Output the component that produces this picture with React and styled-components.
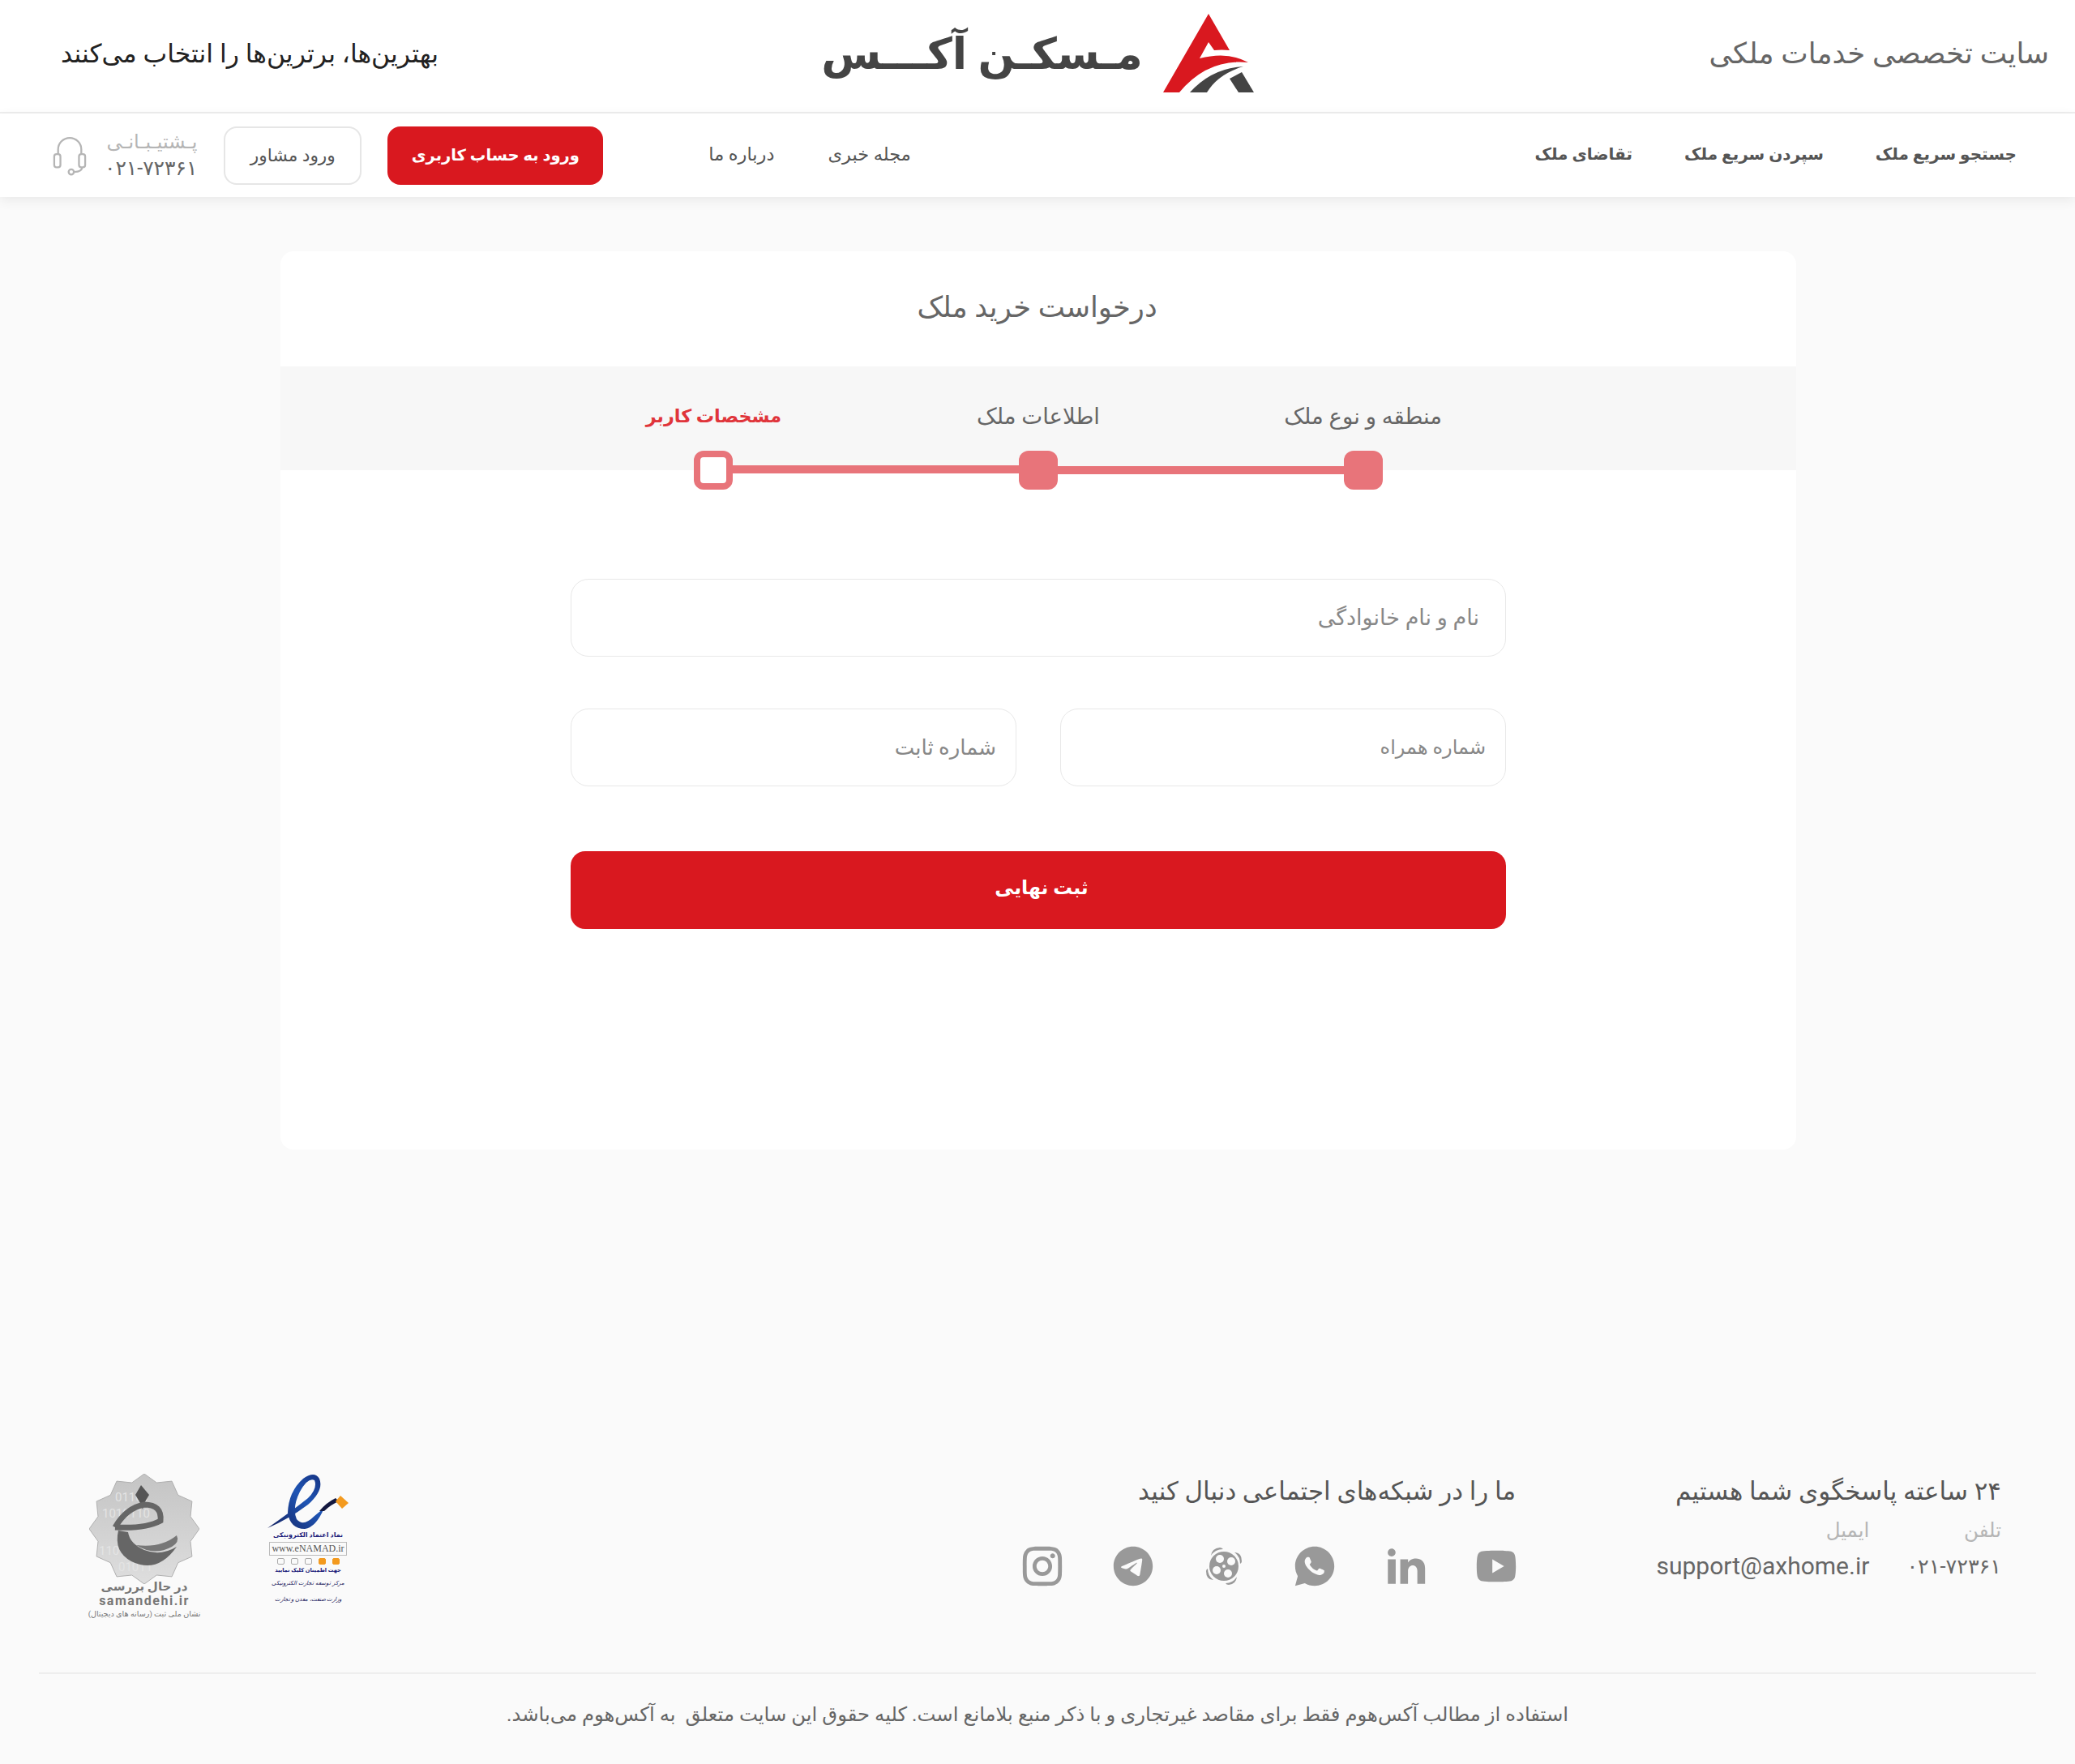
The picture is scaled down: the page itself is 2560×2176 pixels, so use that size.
import React from 'react';
import styled, { createGlobalStyle } from 'styled-components';
import { RiTelegramFill, RiWhatsappFill, RiLinkedinFill, RiYoutubeFill, RiInstagramLine } from 'react-icons/ri';

const FONT = `Roboto, "DejaVu Sans", sans-serif`;
const RED = '#d9181f';

const GlobalStyle = createGlobalStyle`
  html, body { margin: 0; padding: 0; background: #fafafa; }
  body { font-family: ${FONT}; color: #555; }
  * { box-sizing: border-box; }
`;

const App = () => {
  return (
    <Page dir="rtl">
      <GlobalStyle />
      <Header>
        <Slogan>سایت تخصصی خدمات ملکی</Slogan>
        <Logo>
          <LogoMark />
          <LogoText>مـسکـن آکـــس</LogoText>
        </Logo>
        <Tagline>بهترین‌ها، برترین‌ها را انتخاب می‌کنند</Tagline>
      </Header>

      <Nav>
        <NavGroup>
          <NavLink $bold>جستجو سریع ملک</NavLink>
          <NavLink $bold>سپردن سریع ملک</NavLink>
          <NavLink $bold>تقاضای ملک</NavLink>
        </NavGroup>
        <NavGroupSecondary>
          <NavLink>مجله خبری</NavLink>
          <NavLink>درباره ما</NavLink>
        </NavGroupSecondary>
        <LoginButton>ورود به حساب کاربری</LoginButton>
        <AdvisorButton>ورود مشاور</AdvisorButton>
        <Support>
          <SupportText>
            <SupportLabel>پـشتیـبـانـی</SupportLabel>
            <SupportPhone>۰۲۱-۷۲۳۶۱</SupportPhone>
          </SupportText>
          <HeadsetIcon />
        </Support>
      </Nav>

      <Main>
        <Card>
          <CardTitle>درخواست خرید ملک</CardTitle>
          <StepBand>
            <StepLabels>
              <StepLabel>منطقه و نوع ملک</StepLabel>
              <StepLabel>اطلاعات ملک</StepLabel>
              <StepLabel $active>مشخصات کاربر</StepLabel>
            </StepLabels>
          </StepBand>
          <Track>
            <Dot />
            <TrackLine />
            <Dot />
            <TrackLine $raised />
            <Dot $open />
          </Track>
          <Form>
            <Field placeholder="نام و نام خانوادگی" $pad={32} $size={27} />
            <FieldRow>
              <Field placeholder="شماره همراه" $pad={24} $size={24} />
              <Field placeholder="شماره ثابت" $pad={24} $size={26} />
            </FieldRow>
            <Submit>ثبت نهایی</Submit>
          </Form>
        </Card>
      </Main>

      <Footer>
        <FooterTop>
          <Contact>
            <FooterTitle>۲۴ ساعته پاسخگوی شما هستیم</FooterTitle>
            <ContactRow>
              <ContactItem>
                <ContactLabel>تلفن</ContactLabel>
                <ContactValue>۰۲۱-۷۲۳۶۱</ContactValue>
              </ContactItem>
              <ContactItem>
                <ContactLabel>ایمیل</ContactLabel>
                <ContactValue dir="ltr" $latin>support@axhome.ir</ContactValue>
              </ContactItem>
            </ContactRow>
          </Contact>
          <Social>
            <FooterTitle>ما را در شبکه‌های اجتماعی دنبال کنید</FooterTitle>
            <SocialIcons>
              <RiYoutubeFill size={58} />
              <RiLinkedinFill size={58} />
              <RiWhatsappFill size={58} />
              <AparatIcon />
              <RiTelegramFill size={58} />
              <RiInstagramLine size={58} />
            </SocialIcons>
          </Social>
          <Badges>
            <Enamad />
            <Samandehi />
          </Badges>
        </FooterTop>
        <Copyright>استفاده از مطالب آکس‌هوم فقط برای مقاصد غیرتجاری و با ذکر منبع بلامانع است. کلیه حقوق این سایت متعلق  به آکس‌هوم می‌باشد.</Copyright>
      </Footer>
    </Page>
  );
};

const LogoMark = () => (
  <svg width="112" height="98" viewBox="0 0 112 98">
    <path fill={RED} d="M56 0 L82 45 Q72 44 63 45 L56 35 L45 55 Q80 46 105 60 Q55 55 20 97 L0 97 Z" />
    <path fill="#444" d="M33 97 Q60 67 99 65 Q68 74 54 97 Z" />
    <path fill="#444" d="M97 72 L112 97 L93 97 L82 80 Z" />
  </svg>
);

const HeadsetIcon = () => (
  <svg width="42" height="50" viewBox="0 0 44 50" fill="none" stroke="#b5b5b5" strokeWidth="2.4">
    <path d="M7 24 V17 a15 15 0 0 1 30 0 V24" />
    <rect x="2" y="23" width="8" height="17" rx="3" />
    <rect x="34" y="23" width="8" height="17" rx="3" />
    <path d="M38 40 Q38 46 28 46" />
    <circle cx="24" cy="46" r="3.4" />
  </svg>
);

const AparatIcon = () => (
  <svg width="58" height="58" viewBox="-5 -5 58 58">
    <circle cx="24" cy="24" r="18" fill="#999" />
    <g fill="#fafafa">
      <circle cx="19" cy="15" r="5" />
      <circle cx="33" cy="18" r="5" />
      <circle cx="15" cy="29" r="5" />
      <circle cx="29" cy="33" r="5" />
      <circle cx="24" cy="24" r="2" />
    </g>
    <g fill="#999">
      <path d="M8 11 Q9 2 19 1 Q21 1 23 3 Q13 3 8 11 Z" />
      <path d="M37 7 Q46 7 46 18 Q46 20 44 21 Q44 12 37 7 Z" />
      <path d="M40 37 Q39 46 30 47 Q27 47 26 45 Q35 45 40 37 Z" />
      <path d="M11 41 Q2 41 2 30 Q2 28 4 27 Q4 36 11 41 Z" />
    </g>
  </svg>
);

const Enamad = () => (
  <EnamadBox>
    <svg width="100" height="70" viewBox="0 0 100 70">
      <defs>
        <linearGradient id="ena" x1="0" y1="1" x2="1" y2="0">
          <stop offset="0" stopColor="#14215f" />
          <stop offset="0.6" stopColor="#1f55b5" />
          <stop offset="1" stopColor="#14307f" />
        </linearGradient>
      </defs>
      <path fill="url(#ena)" d="M0 67 Q30 46 50 30 Q62 18 58 8 Q50 4 40 22 Q30 42 36 56 Q44 66 58 52 L70 42 Q60 66 46 68 Q28 68 25 48 Q26 22 44 6 Q58 -4 64 6 Q70 20 50 38 Q26 56 0 67 Z" />
      <path fill="#14183f" d="M64 46 Q72 36 84 30 L88 34 Q78 38 70 46 Z" />
      <path fill="#f39a1f" d="M90 27 L100 36 L92 43 L84 34 Z" />
    </svg>
    <EnamadTitle>نماد اعتماد الکترونیکی</EnamadTitle>
    <EnamadUrl dir="ltr">www.eNAMAD.ir</EnamadUrl>
    <EnamadStars>
      <EnamadStar $on />
      <EnamadStar $on />
      <EnamadStar />
      <EnamadStar />
      <EnamadStar />
    </EnamadStars>
    <EnamadTitle $small>جهت اطمینان کلیک نمایید</EnamadTitle>
    <EnamadScript>مرکز توسعه تجارت الکترونیکی</EnamadScript>
    <EnamadScript>وزارت صنعت، معدن و تجارت</EnamadScript>
  </EnamadBox>
);

// scalloped seal outline for the samandehi badge
const sealPoints = () => {
  const pts = [];
  for (let i = 0; i < 24; i++) {
    const r = i % 2 ? 59 : 68;
    const a = (Math.PI * 2 * i) / 24 - Math.PI / 2;
    pts.push(`${(68 + r * Math.cos(a)).toFixed(1)},${(68 + r * Math.sin(a)).toFixed(1)}`);
  }
  return pts.join(' ');
};

const Samandehi = () => (
  <SamandehiBox>
    <svg width="136" height="136" viewBox="0 0 136 136">
      <defs>
        <linearGradient id="seal" x1="0" y1="0" x2="0" y2="1">
          <stop offset="0" stopColor="#c4c4c4" />
          <stop offset="1" stopColor="#dedede" />
        </linearGradient>
      </defs>
      <polygon points={sealPoints()} fill="url(#seal)" stroke="#b0b0b0" />
      <g fill="#e4e4e4" fontFamily="Roboto, sans-serif" fontSize="15">
        <text x="32" y="34" direction="ltr">01101</text>
        <text x="16" y="54" direction="ltr">1010110</text>
        <text x="12" y="100" direction="ltr">1101001</text>
        <text x="36" y="120" direction="ltr">01011</text>
      </g>
      <path fill="#555" d="M64 14 L74 26 L68 36 L66 44 L63 36 L57 26 Z" />
      <path fill="none" stroke="#666" strokeWidth="7" d="M32 66 Q46 42 68 38 Q90 38 88 58 Q70 68 32 66" />
      <path fill="#666" d="M36 70 Q30 96 52 108 Q84 124 108 90 Q88 102 68 94 Q50 86 48 72 Z" />
      <path fill="#777" d="M58 88 Q88 92 108 76 Q112 84 102 90 Q80 102 58 88 Z" />
    </svg>
    <SamandehiStatus>در حال بررسی</SamandehiStatus>
    <SamandehiUrl dir="ltr">samandehi.ir</SamandehiUrl>
    <SamandehiNote>نشان ملی ثبت (رسانه های دیجیتال)</SamandehiNote>
  </SamandehiBox>
);

export default App;

const Page = styled.div`
  width: 2560px;
  height: 2176px;
  display: flex;
  flex-direction: column;
  background: #fafafa;
  overflow: hidden;
`;

const Header = styled.header`
  height: 140px;
  background: #fff;
  border-bottom: 2px solid #eee;
  display: grid;
  grid-template-columns: 1fr auto 1fr;
  align-items: center;
  padding: 0 32px 6px;
`;

const Slogan = styled.div`
  font-size: 35.5px;
  color: #666;
`;

const Tagline = styled.div`
  font-size: 31.5px;
  color: #222;
  text-align: left;
  margin-left: 43px;
`;

const Logo = styled.div`
  display: flex;
  align-items: center;
  gap: 25px;
`;

const LogoText = styled.div`
  font-size: 53.5px;
  font-weight: 700;
  color: #444;
  white-space: nowrap;
`;

const Nav = styled.nav`
  height: 103px;
  background: #fff;
  display: flex;
  align-items: center;
  padding: 0 72px 0 65px;
  box-shadow: 0 4px 14px rgba(0, 0, 0, 0.07);
  position: relative;
`;

const NavGroup = styled.div`
  display: flex;
  gap: 64px;
  margin-left: auto;
  padding-bottom: 4px;
`;

const NavGroupSecondary = styled(NavGroup)`
  gap: 66px;
  margin-left: 130px;
`;

const NavLink = styled.a`
  font-size: ${(p) => (p.$bold ? 20 : 22.5)}px;
  font-weight: ${(p) => (p.$bold ? 700 : 400)};
  color: #555;
  white-space: nowrap;
`;

const LoginButton = styled.button`
  width: 266px;
  height: 72px;
  border: 0;
  border-radius: 16px;
  background: ${RED};
  color: #fff;
  font: 700 19.5px ${FONT};
`;

const AdvisorButton = styled.button`
  width: 170px;
  height: 72px;
  margin-right: 32px;
  border: 2px solid #e6e6e6;
  border-radius: 16px;
  background: #fff;
  color: #555;
  font: 400 21.7px ${FONT};
`;

const Support = styled.div`
  display: flex;
  align-items: center;
  gap: 22px;
  margin-right: 33px;
`;

const SupportText = styled.div`
  display: flex;
  flex-direction: column;
  gap: 4px;
`;

const SupportLabel = styled.span`
  font-size: 24px;
  color: #b5b5b5;
`;

const SupportPhone = styled.span`
  font-size: 25px;
  color: #666;
`;

const Main = styled.main`
  padding: 67px 0 0 2px;
  display: flex;
  justify-content: center;
`;

const Card = styled.section`
  width: 1870px;
  height: 1108px;
  background: #fff;
  border-radius: 16px;
`;

const CardTitle = styled.h1`
  margin: 0;
  height: 142px;
  padding: 0 3px 5px 0;
  display: flex;
  align-items: center;
  justify-content: center;
  font-size: 35.3px;
  font-weight: 400;
  color: #666;
`;

const StepBand = styled.div`
  height: 128px;
  background: #f7f7f7;
  padding-top: 43px;
`;

const StepLabels = styled.div`
  width: 1202px;
  margin: 0 auto;
  display: grid;
  grid-template-columns: repeat(3, 1fr);
  align-items: center;
  height: 36px;
`;

const StepLabel = styled.div`
  text-align: center;
  font-size: ${(p) => (p.$active ? 22.3 : 27.5)}px;
  font-weight: ${(p) => (p.$active ? 700 : 400)};
  color: ${(p) => (p.$active ? '#e0353b' : '#666')};
`;

const Track = styled.div`
  width: 850px;
  height: 48px;
  margin: -24px auto 0;
  display: flex;
  align-items: center;
`;

const Dot = styled.div`
  width: 48px;
  height: 48px;
  flex: none;
  border-radius: 12px;
  background: ${(p) => (p.$open ? '#fff' : '#e8747a')};
  border: ${(p) => (p.$open ? '8px solid #e8747a' : '0')};
`;

const TrackLine = styled.div`
  flex: 1;
  height: 10px;
  background: #e8747a;
  margin-top: ${(p) => (p.$raised ? '-2px' : '0')};
`;

const Form = styled.form`
  width: 1154px;
  margin: 110px auto 0;
  display: flex;
  flex-direction: column;
  gap: 64px;
`;

const FieldRow = styled.div`
  display: grid;
  grid-template-columns: 1fr 1fr;
  gap: 54px;
`;

const Field = styled.input`
  height: 96px;
  width: 100%;
  border: 1.5px solid #e8e8e8;
  border-radius: 22px;
  background: #fff;
  padding: 0 ${(p) => p.$pad}px;
  font: 400 ${(p) => p.$size}px ${FONT};
  color: #555;
  &::placeholder { color: #888; opacity: 1; }
`;

const Submit = styled.button`
  height: 96px;
  margin-top: 16px;
  padding: 0 0 6px 8px;
  border: 0;
  border-radius: 18px;
  background: ${RED};
  color: #fff;
  font: 700 23.6px ${FONT};
`;

const Footer = styled.footer`
  margin-top: auto;
  padding: 0 48px 13px;
`;

const FooterTop = styled.div`
  height: 250px;
  display: flex;
  align-items: flex-start;
  padding: 0 43px 0 60px;
`;

const Contact = styled.div`
  width: 427px;
  padding-top: 8px;
`;

const FooterTitle = styled.h3`
  margin: 0;
  font-size: 31px;
  font-weight: 400;
  color: #555;
`;

const ContactRow = styled.div`
  display: flex;
  gap: 46px;
  margin-top: 15px;
`;

const ContactItem = styled.div`
  display: flex;
  flex-direction: column;
  gap: 12px;
`;

const ContactLabel = styled.span`
  font-size: 24.5px;
  color: #b5b5b5;
`;

const ContactValue = styled.span`
  font-size: ${(p) => (p.$latin ? 30 : 25.5)}px;
  line-height: 36px;
  color: #666;
`;

const Social = styled.div`
  margin-right: 172px;
  padding-top: 8px;
`;

const SocialIcons = styled.div`
  display: flex;
  gap: 54px;
  margin: 45px -5px 0 0;
  color: #999;
`;

const Badges = styled.div`
  margin-right: auto;
  padding-top: 5px;
  display: flex;
  gap: 80px;
  align-items: flex-start;
`;

const EnamadBox = styled.div`
  width: 104px;
  display: flex;
  flex-direction: column;
  align-items: center;
  color: #1a1a7a;
  font-weight: 700;
`;

const EnamadTitle = styled.div`
  font-size: ${(p) => (p.$small ? 6.6 : 8)}px;
  line-height: 12px;
  white-space: nowrap;
`;

const EnamadUrl = styled.div`
  font: 400 12px "Liberation Serif", serif;
  color: #555;
  border: 1px solid #bbb;
  padding: 0 2px;
  margin: 2px 0;
  white-space: nowrap;
`;

const EnamadStars = styled.div`
  display: flex;
  gap: 8px;
  margin: 1px 0;
`;

const EnamadStar = styled.span`
  width: 9px;
  height: 8px;
  background: ${(p) => (p.$on ? '#f39a1f' : 'transparent')};
  border: 1px solid ${(p) => (p.$on ? '#f39a1f' : '#aaa')};
  border-radius: 2px;
`;

const EnamadScript = styled.div`
  font-size: 7px;
  line-height: 20px;
  font-style: italic;
  font-weight: 400;
  color: #1a1a5e;
  white-space: nowrap;
`;

const SamandehiBox = styled.div`
  width: 140px;
  display: flex;
  flex-direction: column;
  align-items: center;
  color: #777;
  svg { margin-bottom: -6px; }
`;

const SamandehiStatus = styled.div`
  font-size: 15px;
  font-weight: 700;
  line-height: 18px;
`;

const SamandehiUrl = styled.div`
  font-size: 16px;
  font-weight: 700;
  letter-spacing: 1.5px;
  line-height: 18px;
`;

const SamandehiNote = styled.div`
  font-size: 9.6px;
  line-height: 14px;
  white-space: nowrap;
`;

const Copyright = styled.p`
  margin: 0;
  border-top: 2px solid #eee;
  height: 100px;
  display: flex;
  align-items: center;
  justify-content: center;
  font-size: 24.3px;
  color: #666;
  white-space: pre;
`;
